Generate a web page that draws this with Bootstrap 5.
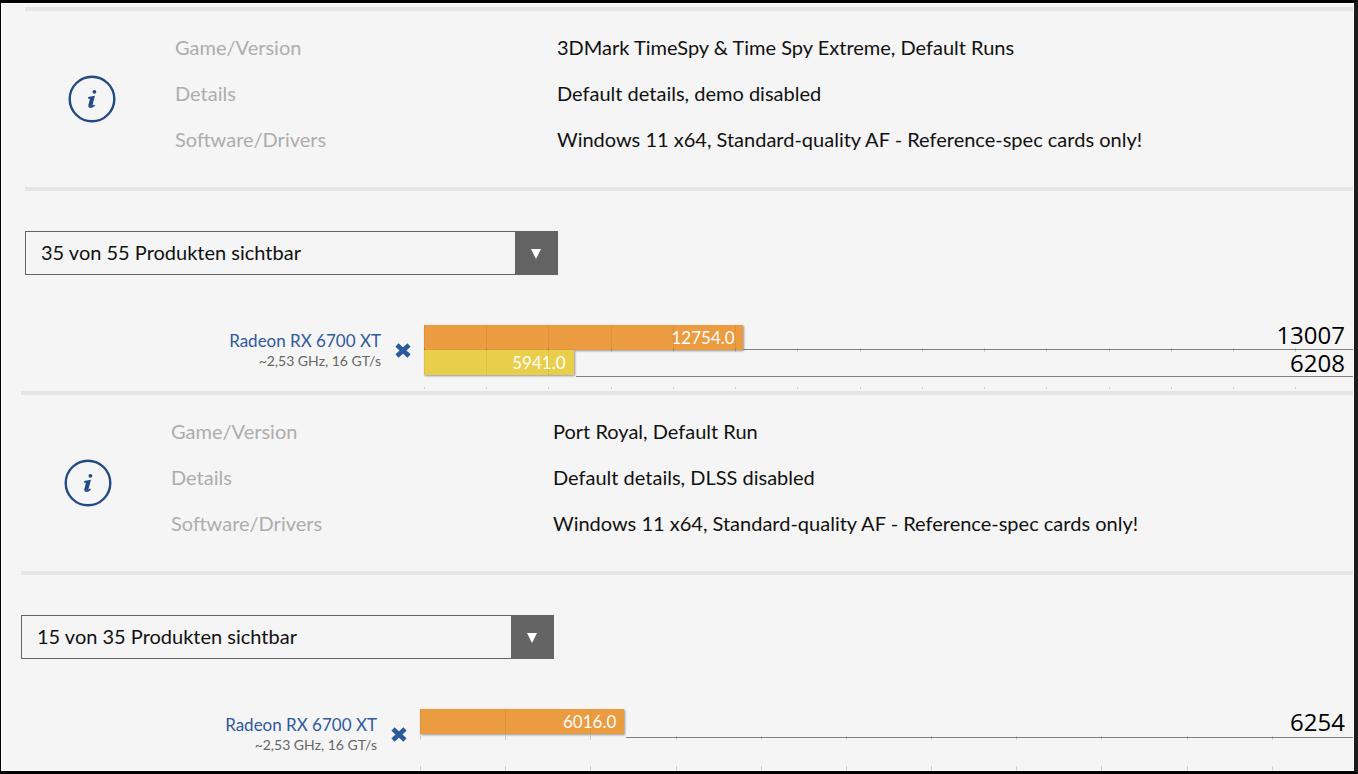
<!DOCTYPE html>
<html lang="de">
<head>
<meta charset="utf-8">
<meta name="viewport" content="width=device-width, initial-scale=1">
<title>Benchmarks Radeon RX 6700 XT</title>
<link href="https://cdn.jsdelivr.net/npm/bootstrap@5.3.0/dist/css/bootstrap.min.css" rel="stylesheet">
<style>
  body { font-family: Lato, "Liberation Sans", sans-serif; font-size: 20px; line-height: 24px; color: #111; background: #f5f5f5; }
  .frame { border: solid #000; border-width: 3px 4px 3px 1px; border-right-color: #1c1c1c; box-shadow: inset 0 0 0 1px #fff; }
  .bench { padding: 0 1px 0 24px; }
  .bench-first { padding-top: 4px; }
  .bench-second { padding-left: 20px; }
  .specs { border: solid #e5e5e5; border-width: 4px 0; }
  .specs-icon { flex: 0 0 150px; padding-right: 16px; }
  .specs-table { margin: 13px 0 25px; }
  .specs-table th, .specs-table td { height: 46px; padding: 0; vertical-align: middle; font-weight: 400; }
  .specs-table th { width: 382px; color: #adadad; }
  .picker { width: 533px; max-width: 100%; height: 44px; margin: 40px 0 50px; border: 1px solid #646464; }
  .picker select { appearance: none; border: 0; background: transparent; padding: 0 15px 2px; color: #111; min-width: 0; }
  .picker-arrow { width: 42px; background: #646464; pointer-events: none; margin-left: -42px; }
  .product { flex: 0 0 356px; line-height: 20px; margin-top: 6px; }
  .product a { font-size: 17px; color: #2f5a9e; }
  .product-clock { font-size: 14px; color: #666; }
  .remove { flex: 0 0 43px; padding: 0 12px 0 0; margin-top: 17px; height: 17px; color: #2a5a9c; line-height: 0; }
  .ticks { background-image: repeating-linear-gradient(90deg, rgba(0,0,0,.16) 0 1px, transparent 1px var(--step)); }
  .bar-row { height: 29px; }
  .bar-row-top { height: 25px; }
  .bar-row-low { height: 27px; }
  .bar { height: 25px; padding-right: 8px; font-size: 17px; line-height: 25px; color: #fff; box-shadow: 1px 1px 2px rgba(0,0,0,.4); }
  .bar-orange { background-color: #eb9b40; }
  .bar-yellow { background-color: #e9ce4c; }
  .bar-ticks { inset: 0; opacity: .4; clip-path: inset(0 calc(100% - var(--len)) 0 0); }
  .line-ticks { left: 0; right: 0; bottom: -2px; height: 4px; }
  .rest { border-bottom: 1px solid #808080; padding-right: 8px; font-family: "Open Sans", "Noto Sans", sans-serif; font-size: 24px; line-height: 20px; color: #000; }
  .rest-gap { margin-left: 2px; line-height: 26px; }
  .scale { height: 2px; margin: 10px 0 2px; }
  .scale-tall { height: 5px; margin: 28px 0 0; }
</style>
</head>
<body>
<main class="frame min-vh-100">
  <section class="bench bench-first">
    <div class="specs d-flex">
      <div class="specs-icon d-flex align-items-center justify-content-center">
        <svg width="48" height="48" viewBox="0 0 48 48" fill="none" role="img" aria-label="Info"><circle cx="24" cy="24" r="22.3" stroke="#214b82" stroke-width="2.4"/><circle cx="26.4" cy="16.8" r="1.9" fill="#214b82"/><path d="M20.2 22.6 26 21.6 23.7 30.2q-.4 1.7 2.8-.2M20.3 23.1l2.5.2-1.7 6.8q-.6 2.4 1.7 2.1 1.8-.3 3.8-2" stroke="#214b82" stroke-width="1.4"/><path d="M22.4 22.5 26 21.8 23.2 32 20.9 31.2Z" fill="#214b82"/></svg>
      </div>
      <table class="specs-table flex-grow-1">
        <tr><th scope="row">Game/Version</th><td>3DMark TimeSpy &amp; Time Spy Extreme, Default Runs</td></tr>
        <tr><th scope="row">Details</th><td>Default details, demo disabled</td></tr>
        <tr><th scope="row">Software/Drivers</th><td>Windows 11 x64, Standard-quality AF - Reference-spec cards only!</td></tr>
      </table>
    </div>
    <div class="picker d-flex">
      <select class="flex-grow-1" aria-label="Produkte"><option>35 von 55 Produkten sichtbar</option></select>
      <span class="picker-arrow d-flex align-items-center justify-content-center"><svg width="12" height="12" viewBox="0 0 12 12"><path d="M1 2h10L6 12Z" fill="#fff"/></svg></span>
    </div>
    <div class="d-flex">
      <div class="product text-end"><a href="#" class="d-block text-decoration-none">Radeon RX 6700 XT</a><div class="product-clock">~2,53 GHz, 16 GT/s</div></div>
      <button type="button" class="remove btn border-0 text-end" aria-label="Entfernen"><svg width="18" height="17" viewBox="0 0 18 17"><path d="m3 3 12 11M15 3 3 14" stroke="currentColor" stroke-width="4.6"/></svg></button>
      <div class="flex-grow-1" style="--step:6.7%">
        <div class="bar-row-top d-flex position-relative">
          <div class="bar bar-orange text-end" style="width:34.3%">12754.0</div>
          <div class="rest flex-grow-1 d-flex justify-content-end align-items-start">13007</div>
          <div class="bar-ticks ticks position-absolute" style="--len:34.3%"></div>
          <div class="line-ticks ticks position-absolute"></div>
        </div>
        <div class="bar-row-low d-flex position-relative">
          <div class="bar bar-yellow text-end" style="width:16.1%">5941.0</div>
          <div class="rest rest-gap flex-grow-1 d-flex justify-content-end align-items-start">6208</div>
          <div class="bar-ticks ticks position-absolute" style="--len:16.1%"></div>
        </div>
        <div class="scale ticks"></div>
      </div>
    </div>
  </section>

  <section class="bench bench-second">
    <div class="specs d-flex">
      <div class="specs-icon d-flex align-items-center justify-content-center">
        <svg width="48" height="48" viewBox="0 0 48 48" fill="none" role="img" aria-label="Info"><circle cx="24" cy="24" r="22.3" stroke="#214b82" stroke-width="2.4"/><circle cx="26.4" cy="16.8" r="1.9" fill="#214b82"/><path d="M20.2 22.6 26 21.6 23.7 30.2q-.4 1.7 2.8-.2M20.3 23.1l2.5.2-1.7 6.8q-.6 2.4 1.7 2.1 1.8-.3 3.8-2" stroke="#214b82" stroke-width="1.4"/><path d="M22.4 22.5 26 21.8 23.2 32 20.9 31.2Z" fill="#214b82"/></svg>
      </div>
      <table class="specs-table flex-grow-1">
        <tr><th scope="row">Game/Version</th><td>Port Royal, Default Run</td></tr>
        <tr><th scope="row">Details</th><td>Default details, DLSS disabled</td></tr>
        <tr><th scope="row">Software/Drivers</th><td>Windows 11 x64, Standard-quality AF - Reference-spec cards only!</td></tr>
      </table>
    </div>
    <div class="picker d-flex">
      <select class="flex-grow-1" aria-label="Produkte"><option>15 von 35 Produkten sichtbar</option></select>
      <span class="picker-arrow d-flex align-items-center justify-content-center"><svg width="12" height="12" viewBox="0 0 12 12"><path d="M1 2h10L6 12Z" fill="#fff"/></svg></span>
    </div>
    <div class="d-flex">
      <div class="product text-end"><a href="#" class="d-block text-decoration-none">Radeon RX 6700 XT</a><div class="product-clock">~2,53 GHz, 16 GT/s</div></div>
      <button type="button" class="remove btn border-0 text-end" aria-label="Entfernen"><svg width="18" height="17" viewBox="0 0 18 17"><path d="m3 3 12 11M15 3 3 14" stroke="currentColor" stroke-width="4.6"/></svg></button>
      <div class="flex-grow-1" style="--step:9.13%">
        <div class="bar-row d-flex position-relative">
          <div class="bar bar-orange text-end" style="width:21.9%">6016.0</div>
          <div class="rest rest-gap flex-grow-1 d-flex justify-content-end align-items-start">6254</div>
          <div class="bar-ticks ticks position-absolute" style="--len:21.9%"></div>
          <div class="line-ticks ticks position-absolute"></div>
        </div>
        <div class="scale scale-tall ticks"></div>
      </div>
    </div>
  </section>
</main>
<script src="https://cdn.jsdelivr.net/npm/bootstrap@5.3.0/dist/js/bootstrap.bundle.min.js"></script>
</body>
</html>
